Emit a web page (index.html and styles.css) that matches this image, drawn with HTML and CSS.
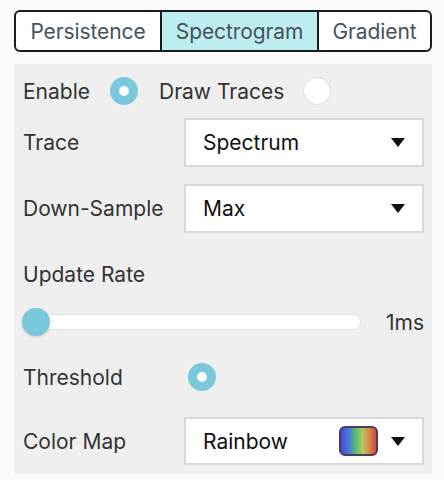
FILE: index.html
```html
<!DOCTYPE html>
<html lang="en">
<head>
    <meta charset="UTF-8">
    <title>Spectrogram Settings</title>
    <link rel="stylesheet" href="styles.css">
</head>
<body>

    <div class="wrap">
        <!-- Mode tabs -->
        <div class="tabs">
            <div class="tab">Persistence</div>
            <div class="tab active">Spectrogram</div>
            <div class="tab">Gradient</div>
        </div>

        <!-- Settings panel -->
        <section class="panel">
            <div class="row row-enable">
                <span class="label">Enable</span>
                <span class="radio on radio-enable"></span>
                <span class="label label-draw">Draw Traces</span>
                <span class="radio radio-draw"></span>
            </div>

            <div class="row row-select">
                <span class="label col">Trace</span>
                <div class="select">
                    <span class="value">Spectrum</span>
                    <span class="arrow"></span>
                </div>
            </div>

            <div class="row row-select row-down">
                <span class="label col">Down-Sample</span>
                <div class="select">
                    <span class="value">Max</span>
                    <span class="arrow"></span>
                </div>
            </div>

            <div class="row row-rate">
                <span class="label">Update Rate</span>
            </div>

            <div class="row row-slider">
                <div class="slider">
                    <div class="track"></div>
                    <div class="thumb"></div>
                </div>
                <span class="label rate-value">1ms</span>
            </div>

            <div class="row row-threshold">
                <span class="label col">Threshold</span>
                <span class="radio on radio-threshold"></span>
            </div>

            <div class="row row-select row-colormap">
                <span class="label col">Color Map</span>
                <div class="select">
                    <span class="value">Rainbow</span>
                    <span class="swatch"></span>
                    <span class="arrow"></span>
                </div>
            </div>
        </section>
    </div>

</body>
</html>
```

FILE: styles.css
```css
* {
    margin: 0;
    padding: 0;
    box-sizing: border-box;
}

body {
    font-family: 'Inter', 'Noto Sans', sans-serif;
    background-color: #fafafa;
    color: #333;
}

.wrap {
    padding: 10px 12px 0 14px;
}

/* Tabs */
.tabs {
    display: grid;
    grid-template-columns: 144px 157px 1fr;
    height: 42px;
    border: 2px solid #1c1c1c;
    border-radius: 6px;
    overflow: hidden;
    background-color: #fff;
}

.tab {
    display: flex;
    align-items: center;
    justify-content: center;
    font-size: 21px;
    letter-spacing: -0.1px;
    color: #46525c;
}

.tab + .tab {
    border-left: 2px solid #1c1c1c;
}

.tab.active {
    background-color: #bdedee;
}

/* Panel */
.panel {
    margin-top: 12px;
    background-color: #efefef;
    padding: 0 8px 9px 9px;
}

.row {
    display: flex;
    align-items: center;
}

.label {
    font-size: 21px;
    color: #333;
}

.col {
    width: 161px;
    flex-shrink: 0;
}

.row-enable {
    height: 54px;
}

.radio {
    width: 28px;
    height: 28px;
    border-radius: 50%;
    background-color: #fff;
    border: 1px solid #dcdcdc;
    flex-shrink: 0;
}

.radio.on {
    background-color: #fff;
    border: 9px solid #7ac8dc;
}

.radio-enable {
    margin-left: 20px;
}

.label-draw {
    margin-left: 21px;
}

.radio-draw {
    margin-left: 19px;
}

/* Selects */
.select {
    flex: 1;
    height: 49px;
    display: flex;
    align-items: center;
    background-color: #fff;
    border: 2px solid #d8d8d8;
    padding: 0 17px 0 17px;
}

.select .value {
    font-size: 21px;
    color: #111;
    flex: 1;
}

.arrow {
    width: 0;
    height: 0;
    border-left: 7.5px solid transparent;
    border-right: 7.5px solid transparent;
    border-top: 9px solid #111;
}

.swatch {
    width: 39px;
    height: 30px;
    margin-right: 13px;
    border: 2px solid #4d3d58;
    border-radius: 6px;
    background: linear-gradient(to right, #3f4ad8 0%, #4a78e0 22%, #5cc65c 45%, #b9c46a 62%, #d88a46 80%, #d8463e 100%);
}

.row-down {
    margin-top: 17px;
}

.row-rate {
    height: 36px;
    margin-top: 23px;
}

/* Slider */
.row-slider {
    height: 30px;
    margin-top: 15px;
}

.slider {
    position: relative;
    width: 339px;
    height: 30px;
    margin-left: -1px;
    display: flex;
    align-items: center;
}

.track {
    width: 100%;
    height: 16px;
    background-color: #fff;
    border: 1px solid #e2e2e2;
    border-radius: 8px;
}

.thumb {
    position: absolute;
    left: 0;
    top: 1px;
    width: 28px;
    height: 28px;
    border-radius: 50%;
    background-color: #7ac8dc;
    box-shadow: 0 1px 3px rgba(0, 0, 0, 0.15);
}

.rate-value {
    margin-left: auto;
}

.row-threshold {
    height: 36px;
    margin-top: 22px;
}

.radio-threshold {
    margin-left: 4px;
}

.row-colormap {
    margin-top: 22px;
}

.row-colormap .select {
    height: 48px;
}
```
